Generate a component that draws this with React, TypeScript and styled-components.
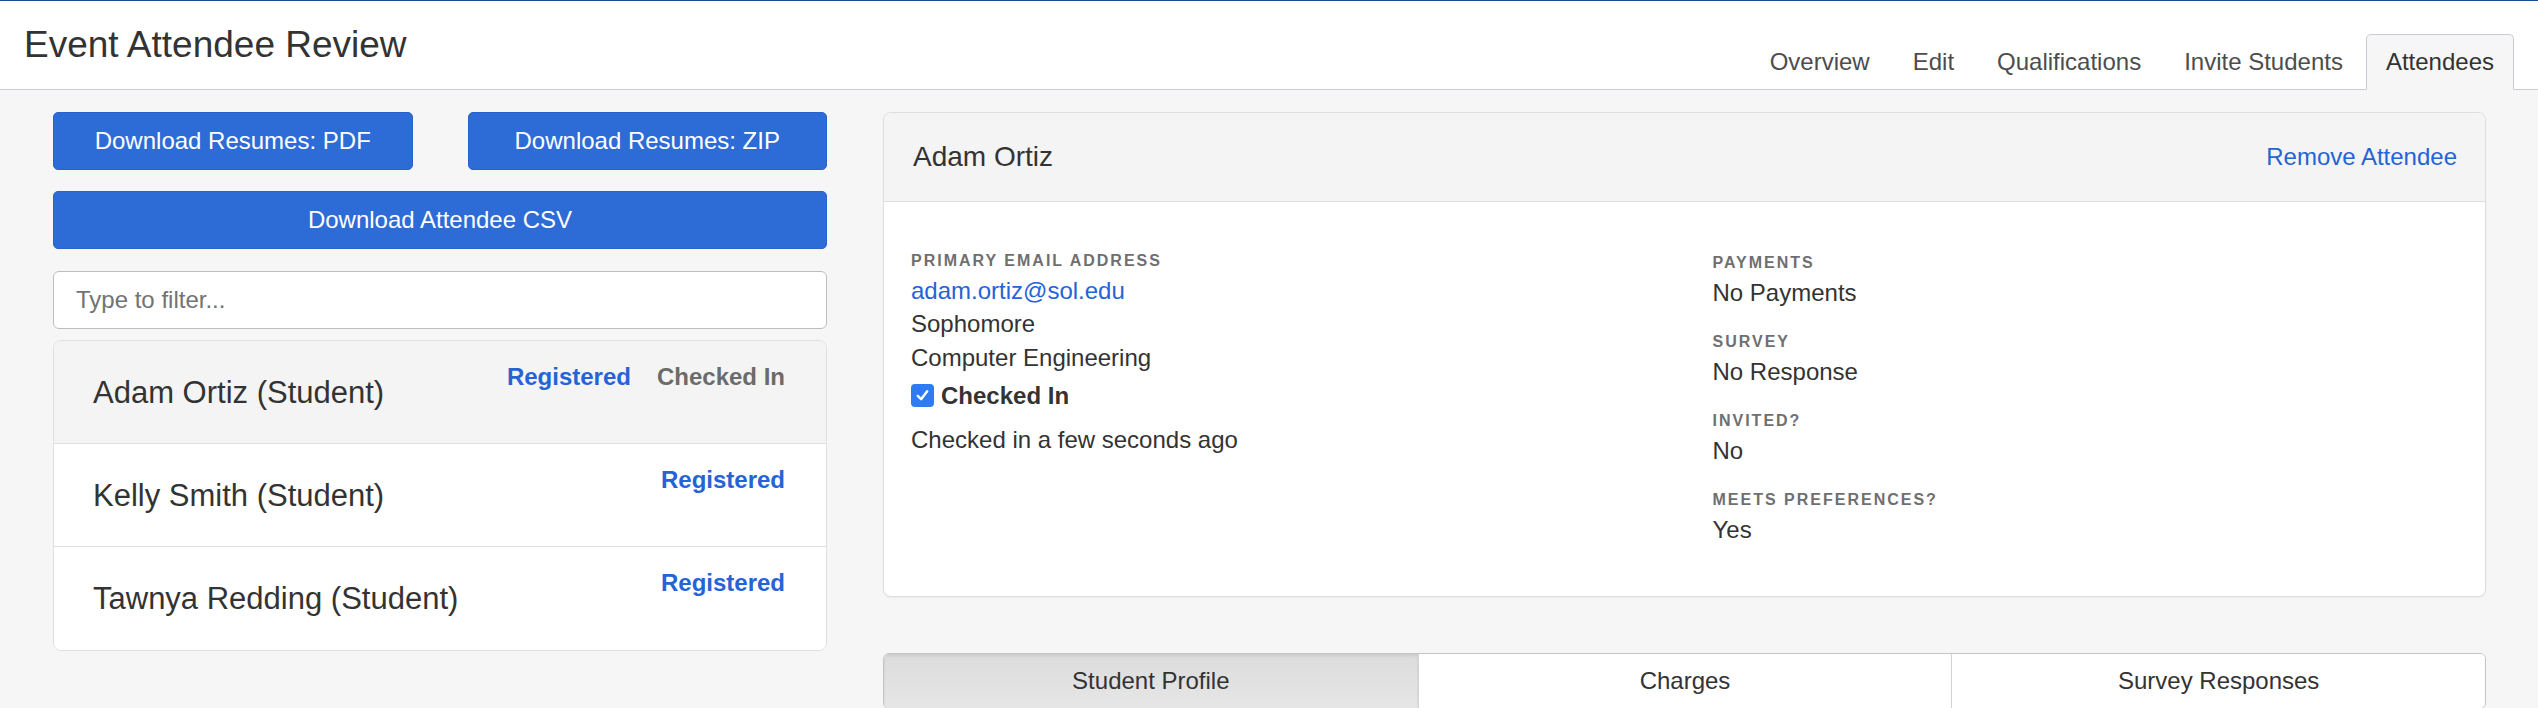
import React from "react";
import styled, { createGlobalStyle } from "styled-components";

const GlobalStyle = createGlobalStyle`
  * { box-sizing: border-box; }
  html, body {
    margin: 0;
    padding: 0;
    background: #f6f6f6;
    font-family: "Liberation Sans", Arial, Helvetica, sans-serif;
    color: #333;
  }
`;

const Page = styled.div`
  min-height: 708px;
  background: #f6f6f6;
`;

const Header = styled.header`
  height: 90px;
  background: #fff;
  border-top: 1px solid #1e4a8f;
  border-bottom: 1px solid #c8cdd3;
  display: flex;
  justify-content: space-between;
  align-items: flex-end;
  padding: 0 24px;
`;

const Title = styled.h1`
  align-self: flex-start;
  margin: 22px 0 0;
  font-size: 37px;
  line-height: 44px;
  font-weight: 400;
  color: #333;
`;

const Tabs = styled.nav`
  display: flex;
  gap: 3px;
  margin-bottom: -1px;
`;

const Tab = styled.a<{ $active?: boolean }>`
  display: block;
  font-size: 24px;
  line-height: 29px;
  padding: 12px 19px 13px;
  border: 1px solid transparent;
  border-radius: 5px 5px 0 0;
  color: ${(p) => (p.$active ? "#333" : "#4d4d4d")};
  background: ${(p) => (p.$active ? "#f6f6f6" : "transparent")};
  border-color: ${(p) => (p.$active ? "#c8cdd3 #c8cdd3 #f6f6f6" : "transparent")};
  text-decoration: none;
  cursor: pointer;
`;

const Main = styled.main`
  display: grid;
  grid-template-columns: 774px 1fr;
  column-gap: 56px;
  padding: 22px 52px 0 53px;
  align-items: start;
`;

const LeftColumn = styled.section`
  display: flex;
  flex-direction: column;
`;

const ButtonRow = styled.div`
  display: grid;
  grid-template-columns: 1fr 1fr;
  column-gap: 55px;
`;

const PrimaryButton = styled.button<{ $mt?: number }>`
  height: 58px;
  margin-top: ${(p) => p.$mt ?? 0}px;
  background: #2d6bd6;
  border: 1px solid #2863cc;
  border-radius: 5px;
  color: #fff;
  font-family: inherit;
  font-size: 24px;
  cursor: pointer;
`;

const FilterInput = styled.input`
  margin-top: 22px;
  height: 58px;
  border: 1px solid #bdbdbd;
  border-radius: 6px;
  background: #fff;
  padding: 0 22px;
  font-family: inherit;
  font-size: 24px;
  color: #333;
  &::placeholder {
    color: #737373;
  }
`;

const List = styled.ul`
  list-style: none;
  margin: 11px 0 0;
  padding: 0;
  background: #fff;
  border: 1px solid #e0e0e0;
  border-radius: 8px;
  overflow: hidden;
`;

const Row = styled.li<{ $active?: boolean }>`
  height: 103px;
  display: flex;
  justify-content: space-between;
  align-items: flex-start;
  padding: 21px 41px 0 39px;
  background: ${(p) => (p.$active ? "#f4f4f4" : "#fff")};
  border-bottom: 1px solid #e0e0e0;
  &:last-child {
    border-bottom: none;
  }
`;

const Name = styled.span`
  margin-top: 12px;
  font-size: 31px;
  line-height: 37px;
  color: #333;
`;

const Statuses = styled.div`
  display: flex;
  gap: 26px;
`;

const Status = styled.span<{ $tone: "blue" | "gray" }>`
  font-size: 24px;
  line-height: 29px;
  font-weight: 700;
  color: ${(p) => (p.$tone === "blue" ? "#2563d6" : "#6b6b6b")};
`;

const RightColumn = styled.section`
  display: flex;
  flex-direction: column;
`;

const Card = styled.div`
  background: #fff;
  border: 1px solid #dedede;
  border-radius: 8px;
  overflow: hidden;
  box-shadow: 0 1px 2px rgba(0, 0, 0, 0.05);
`;

const CardHeader = styled.div`
  height: 89px;
  background: #f4f4f4;
  border-bottom: 1px solid #dedede;
  display: flex;
  justify-content: space-between;
  align-items: center;
  padding: 0 28px 0 29px;
`;

const CardTitle = styled.h2`
  margin: 0;
  font-size: 28px;
  font-weight: 400;
  color: #333;
`;

const LinkText = styled.a`
  font-size: 24px;
  color: #2563d6;
  text-decoration: none;
  cursor: pointer;
`;

const CardBody = styled.div`
  display: grid;
  grid-template-columns: 1fr 1fr;
  column-gap: 56px;
  padding: 48px 27px 50px;
`;

const InfoColumn = styled.div<{ $offset?: number }>`
  display: flex;
  flex-direction: column;
  padding-top: ${(p) => p.$offset ?? 0}px;
`;

const Field = styled.div`
  display: flex;
  flex-direction: column;
  & + & {
    margin-top: 23px;
  }
`;

const Label = styled.div`
  font-size: 16px;
  line-height: 20px;
  font-weight: 700;
  letter-spacing: 2px;
  text-transform: uppercase;
  color: #6f6f6f;
  margin-bottom: 3px;
`;

const Value = styled.div<{ $lh?: number }>`
  font-size: 24px;
  line-height: ${(p) => p.$lh ?? 33}px;
  color: #333;
`;

const EmailLink = styled.a`
  font-size: 24px;
  line-height: 33px;
  color: #2563d6;
  text-decoration: none;
`;

const CheckRow = styled.label`
  display: flex;
  align-items: center;
  gap: 7px;
  margin-top: 4px;
  font-size: 24px;
  line-height: 33px;
  font-weight: 700;
  color: #333;
`;

const CheckBox = styled.span`
  width: 23px;
  height: 23px;
  border-radius: 4px;
  background: #2f7bf6;
  display: inline-flex;
  align-items: center;
  justify-content: center;
`;

const Note = styled.div`
  margin-top: 11px;
  font-size: 24px;
  line-height: 33px;
  color: #333;
`;

const Segmented = styled.div`
  margin-top: 56px;
  height: 56px;
  display: grid;
  grid-template-columns: 1fr 1fr 1fr;
  border: 1px solid #c4c4c4;
  border-radius: 6px;
  overflow: hidden;
  background: #fff;
`;

const Segment = styled.button<{ $active?: boolean }>`
  border: none;
  border-left: 1px solid #d2d2d2;
  &:first-child {
    border-left: none;
  }
  background: ${(p) => (p.$active ? "linear-gradient(#dcdcdc, #e6e6e6)" : "#fff")};
  box-shadow: ${(p) => (p.$active ? "inset 0 2px 3px rgba(0,0,0,0.08)" : "none")};
  font-family: inherit;
  font-size: 24px;
  color: #333;
  cursor: pointer;
`;

const attendees = [
  { name: "Adam Ortiz (Student)", checkedIn: true, active: true },
  { name: "Kelly Smith (Student)", checkedIn: false, active: false },
  { name: "Tawnya Redding (Student)", checkedIn: false, active: false },
];

export default function App() {
  return (
    <Page>
      <GlobalStyle />
      <Header>
        <Title>Event Attendee Review</Title>
        <Tabs>
          <Tab>Overview</Tab>
          <Tab>Edit</Tab>
          <Tab>Qualifications</Tab>
          <Tab>Invite Students</Tab>
          <Tab $active>Attendees</Tab>
        </Tabs>
      </Header>
      <Main>
        <LeftColumn>
          <ButtonRow>
            <PrimaryButton>Download Resumes: PDF</PrimaryButton>
            <PrimaryButton>Download Resumes: ZIP</PrimaryButton>
          </ButtonRow>
          <PrimaryButton $mt={21}>Download Attendee CSV</PrimaryButton>
          <FilterInput placeholder="Type to filter..." />
          <List>
            {attendees.map((a) => (
              <Row key={a.name} $active={a.active}>
                <Name>{a.name}</Name>
                <Statuses>
                  <Status $tone="blue">Registered</Status>
                  {a.checkedIn && <Status $tone="gray">Checked In</Status>}
                </Statuses>
              </Row>
            ))}
          </List>
        </LeftColumn>
        <RightColumn>
          <Card>
            <CardHeader>
              <CardTitle>Adam Ortiz</CardTitle>
              <LinkText>Remove Attendee</LinkText>
            </CardHeader>
            <CardBody>
              <InfoColumn $offset={1}>
                <Label>Primary Email Address</Label>
                <EmailLink>adam.ortiz@sol.edu</EmailLink>
                <Value $lh={33}>Sophomore</Value>
                <Value $lh={35}>Computer Engineering</Value>
                <CheckRow>
                  <CheckBox>
                    <svg width="15" height="15" viewBox="0 0 16 16" fill="none">
                      <path
                        d="M3 8.5 L6.5 12 L13 3.5"
                        stroke="#fff"
                        strokeWidth="2.6"
                        strokeLinecap="round"
                        strokeLinejoin="round"
                      />
                    </svg>
                  </CheckBox>
                  Checked In
                </CheckRow>
                <Note>Checked in a few seconds ago</Note>
              </InfoColumn>
              <InfoColumn $offset={3}>
                <Field>
                  <Label>Payments</Label>
                  <Value>No Payments</Value>
                </Field>
                <Field>
                  <Label>Survey</Label>
                  <Value>No Response</Value>
                </Field>
                <Field>
                  <Label>Invited?</Label>
                  <Value>No</Value>
                </Field>
                <Field>
                  <Label>Meets Preferences?</Label>
                  <Value>Yes</Value>
                </Field>
              </InfoColumn>
            </CardBody>
          </Card>
          <Segmented>
            <Segment $active>Student Profile</Segment>
            <Segment>Charges</Segment>
            <Segment>Survey Responses</Segment>
          </Segmented>
        </RightColumn>
      </Main>
    </Page>
  );
}
